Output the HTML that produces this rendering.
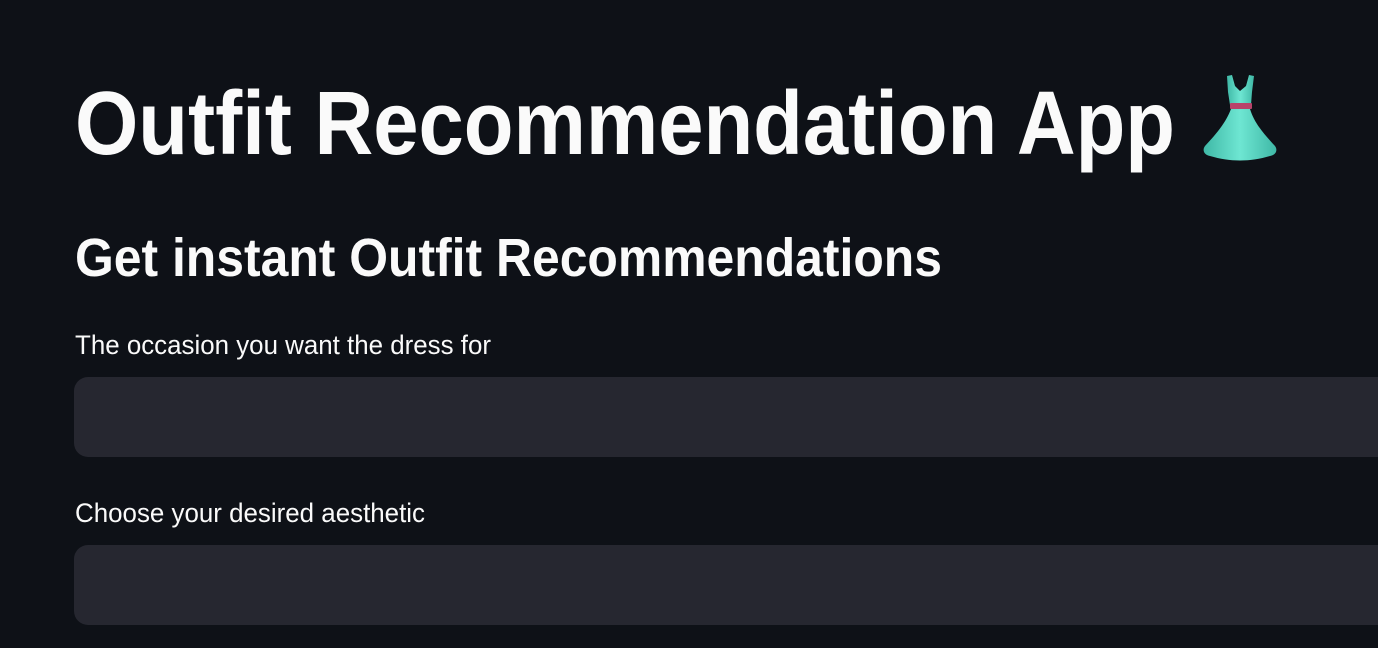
<!DOCTYPE html>
<html><head><meta charset="utf-8"><style>
html,body{margin:0;padding:0;background:#0e1117;width:1378px;height:648px;overflow:hidden}
svg{display:block}
</style></head><body>
<svg width="1378" height="648" viewBox="0 0 1378 648" xmlns="http://www.w3.org/2000/svg">
<rect width="1378" height="648" fill="#0e1117"/>
<g font-family="Liberation Sans, sans-serif" fill="#fafafa">
<text x="75" y="154" font-size="90" font-weight="bold" textLength="1100" lengthAdjust="spacingAndGlyphs">Outfit Recommendation App</text>
<text x="75" y="276" font-size="54" font-weight="bold" textLength="867" lengthAdjust="spacingAndGlyphs">Get instant Outfit Recommendations</text>
<text x="75" y="354" font-size="27" textLength="416" lengthAdjust="spacingAndGlyphs">The occasion you want the dress for</text>
<text x="75" y="522" font-size="27" textLength="350" lengthAdjust="spacingAndGlyphs">Choose your desired aesthetic</text>
</g>
<rect x="74" y="377" width="1340" height="80" rx="14" fill="#262730"/>
<rect x="74" y="545" width="1340" height="80" rx="14" fill="#262730"/>
<defs>
<linearGradient id="dg" x1="0" y1="0" x2="1" y2="0">
<stop offset="0" stop-color="#3fb8a6"/><stop offset="0.5" stop-color="#6ee6d2"/><stop offset="1" stop-color="#3fb8a6"/>
</linearGradient>
</defs>
<g>
<path d="M1227 76 L1232 75 L1235 86 L1240 91 L1246 86 L1249 75 L1254 76 L1252 92 L1251 105 L1230 105 L1228 92 Z" fill="url(#dg)"/>
<rect x="1230" y="103" width="22" height="6" rx="1" fill="#b8436a"/>
<path d="M1231 109 L1250 109 C1254 122 1262 132 1275 146 C1278 150 1276 155 1270 156 C1250 162 1230 162 1210 156 C1204 155 1202 150 1205 146 C1218 132 1226 122 1231 109 Z" fill="url(#dg)"/>
</g>
</svg>
</body></html>
